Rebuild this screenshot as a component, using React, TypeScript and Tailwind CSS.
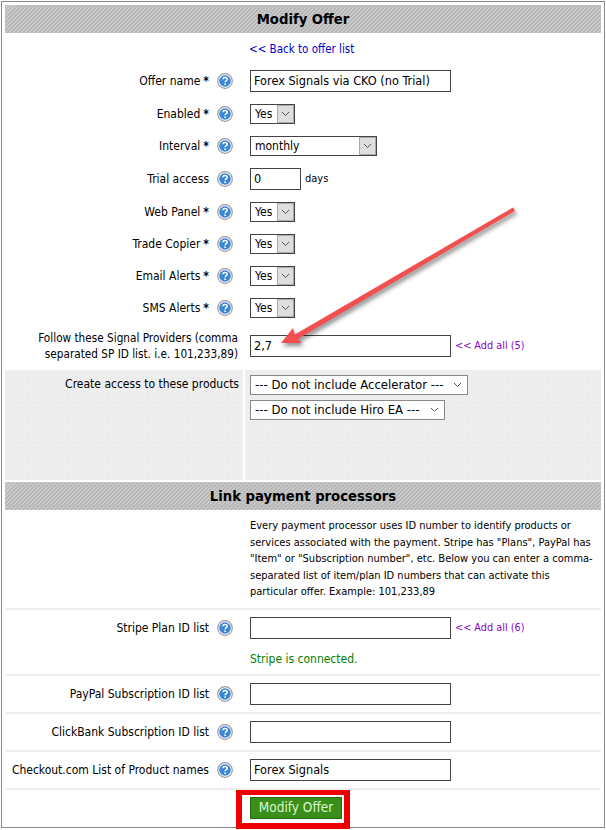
import type { ReactNode } from "react"

const labelFont = "font-['DejaVu_Sans_Condensed','DejaVu_Sans',sans-serif]"
const lineClass = "border-t-2 border-[#eee]"

function HelpIcon() {
  return (
    <svg width="16" height="16" viewBox="0 0 16 16" className="shrink-0">
      <circle cx="8" cy="8" r="7.3" fill="#fff" stroke="#9a9a9a" strokeWidth="1.2" />
      <circle cx="8" cy="8" r="5.8" fill="#3b86d6" />
      <path d="M5.9 6.3C6 5 7 4.5 8 4.5c1.3 0 2.2.7 2.2 1.8 0 1.6-2.1 1.6-2.1 3" fill="none" stroke="#fff" strokeWidth="1.5" />
      <rect x="7.3" y="10.4" width="1.6" height="1.6" fill="#fff" />
    </svg>
  )
}

function Chevron() {
  return (
    <svg width="9" height="6" viewBox="0 0 9 6" className="shrink-0">
      <path d="M1 1l3.5 3.5L8 1" fill="none" stroke="#555" strokeWidth="1" />
    </svg>
  )
}

function Select({ value, width }: { value: string; width: string }) {
  return (
    <div className={`flex h-5 items-center border border-[#444] bg-white pl-1 ${width}`}>
      <span className="flex-1 truncate">{value}</span>
      <span className="flex h-full w-[17px] items-center justify-center border border-[#aaa] bg-[#dedede]">
        <Chevron />
      </span>
    </div>
  )
}

function PlainSelect({ value, width }: { value: string; width: string }) {
  return (
    <div className={`flex h-5 items-center justify-between border border-[#888] bg-white pr-[5px] pl-1 text-[13px] ${width}`}>
      {value}
      <Chevron />
    </div>
  )
}

function Input({ value, width }: { value?: string; width: string }) {
  return (
    <div className={`flex h-[22px] items-center border border-[#444] bg-white px-[3px] text-[12.6px] ${width}`}>
      {value}
    </div>
  )
}

function Label({ text, star }: { text: string; star?: boolean }) {
  return (
    <div className="flex w-[228px] items-center justify-end gap-2">
      <span className="text-right">
        {text}
        {star && <b className="ml-[3px]">*</b>}
      </span>
      <HelpIcon />
    </div>
  )
}

function Row({
  label,
  star,
  h,
  children,
  line,
}: {
  label: string
  star?: boolean
  h: string
  children: ReactNode
  line?: boolean
}) {
  return (
    <div className={`flex items-center ${h} ${line ? lineClass : ""}`}>
      <Label text={label} star={star} />
      <div className="ml-[17px] flex items-center gap-1">{children}</div>
    </div>
  )
}

function Header({ children }: { children: ReactNode }) {
  return (
    <div className="flex h-7 items-center justify-center bg-[repeating-linear-gradient(135deg,#b6b6b6_0px,#b6b6b6_1.41px,#c9c9c9_1.41px,#c9c9c9_2.83px)] text-[14.7px] font-bold">
      {children}
    </div>
  )
}

const dots = "bg-[#eee] bg-[radial-gradient(#e9e9e9_1px,transparent_1px)] bg-[length:5px_5px]"

export default function App() {
  return (
    <div className={`relative h-[830px] w-[606px] bg-white p-px text-xs text-black ${labelFont}`}>
      <div className="h-[827px] w-[604px] border border-[#888] p-[3px]">
        <Header>Modify Offer</Header>

        <div className="flex h-8 items-center pt-[2px] pl-[244px] text-[11.5px] text-[#0000cc]">&lt;&lt; Back to offer list</div>
        <Row label="Offer name" star h="h-8">
          <Input value="Forex Signals via CKO (no Trial)" width="w-[201px]" />
        </Row>
        <Row label="Enabled" star h="h-[34px]">
          <Select value="Yes" width="w-[45px]" />
        </Row>
        <Row label="Interval" star h="h-[30px]">
          <Select value="monthly" width="w-[127px]" />
        </Row>
        <Row label="Trial access" h="h-9">
          <Input value="0" width="w-[51px]" />
          <span className="text-[11px]">days</span>
        </Row>
        <Row label="Web Panel" star h="h-[30px]">
          <Select value="Yes" width="w-[45px]" />
        </Row>
        <Row label="Trade Copier" star h="h-[34px]">
          <Select value="Yes" width="w-[45px]" />
        </Row>
        <Row label="Email Alerts" star h="h-[30px]">
          <Select value="Yes" width="w-[45px]" />
        </Row>
        <Row label="SMS Alerts" star h="h-[34px]">
          <Select value="Yes" width="w-[45px]" />
        </Row>

        <div className="flex h-[42px] items-center">
          <div className="w-[233px] text-right text-[11.7px] leading-4">
            Follow these Signal Providers (comma
            <br />
            separated SP ID list. i.e. 101,233,89)
          </div>
          <div className="ml-3 flex items-center gap-1">
            <Input value="2,7" width="w-[201px]" />
            <span className="text-[10.8px] text-[#8800cc]">&lt;&lt; Add all (5)</span>
          </div>
        </div>

        <div className="mt-[3px] flex h-[110px] gap-[2px]">
          <div className={`w-[238px] pt-[6px] pr-[4px] text-right ${dots}`}>Create access to these products</div>
          <div className={`flex flex-1 flex-col items-start gap-[5px] pt-[5px] pl-[5px] ${dots}`}>
            <PlainSelect value="--- Do not include Accelerator ---" width="w-[218px]" />
            <PlainSelect value="--- Do not include Hiro EA ---" width="w-[195px]" />
          </div>
        </div>

        <div className="mt-[2px]">
          <Header>Link payment processors</Header>
        </div>

        <div className="h-[98px] pt-2 pl-[245px] text-[11px] leading-[16.5px]">
          Every payment processor uses ID number to identify products or
          <br />
          services associated with the payment. Stripe has "Plans", PayPal has
          <br />
          "Item" or "Subscription number", etc. Below you can enter a comma-
          <br />
          separated list of item/plan ID numbers that can activate this
          <br />
          particular offer. Example: 101,233,89
        </div>

        <div className={`h-[66px] pt-[7px] ${lineClass}`}>
          <div className="flex items-center">
            <Label text="Stripe Plan ID list" />
            <div className="ml-[17px] flex items-center gap-1">
              <Input width="w-[201px]" />
              <span className="text-[10.8px] text-[#8800cc]">&lt;&lt; Add all (6)</span>
            </div>
          </div>
          <div className="mt-[12px] pl-[245px] text-[#008000]">Stripe is connected.</div>
        </div>

        <Row label="PayPal Subscription ID list" h="h-[38px]" line>
          <Input width="w-[201px]" />
        </Row>
        <Row label="ClickBank Subscription ID list" h="h-[38px]" line>
          <Input width="w-[201px]" />
        </Row>
        <Row label="Checkout.com List of Product names" h="h-[38px]" line>
          <Input value="Forex Signals" width="w-[201px]" />
        </Row>

        <div className={`pt-[7px] pl-[245px] ${lineClass}`}>
          <div className="flex h-[22px] w-[92px] items-center justify-center border border-[#2a6a10] bg-[#3a8f1a] text-[13.5px] text-[#d8f5d0]">
            Modify Offer
          </div>
        </div>
      </div>

      {/* annotations drawn on top of the screenshot */}
      <div className="pointer-events-none absolute top-[790px] left-[236px] h-[39px] w-[114px] border-[6px] border-t-[5px] border-[#ee0000]" />
      <svg className="pointer-events-none absolute top-0 left-0 drop-shadow-[2px_3px_2px_rgba(0,0,0,0.45)]" width="606" height="830">
        <path d="M513 207.5 L515 211 L297 339.5 L294 335 Z" fill="#f25050" />
        <path d="M281 343 L293 328 L295.5 337 L302 343 Z" fill="#f25050" />
      </svg>
    </div>
  )
}
